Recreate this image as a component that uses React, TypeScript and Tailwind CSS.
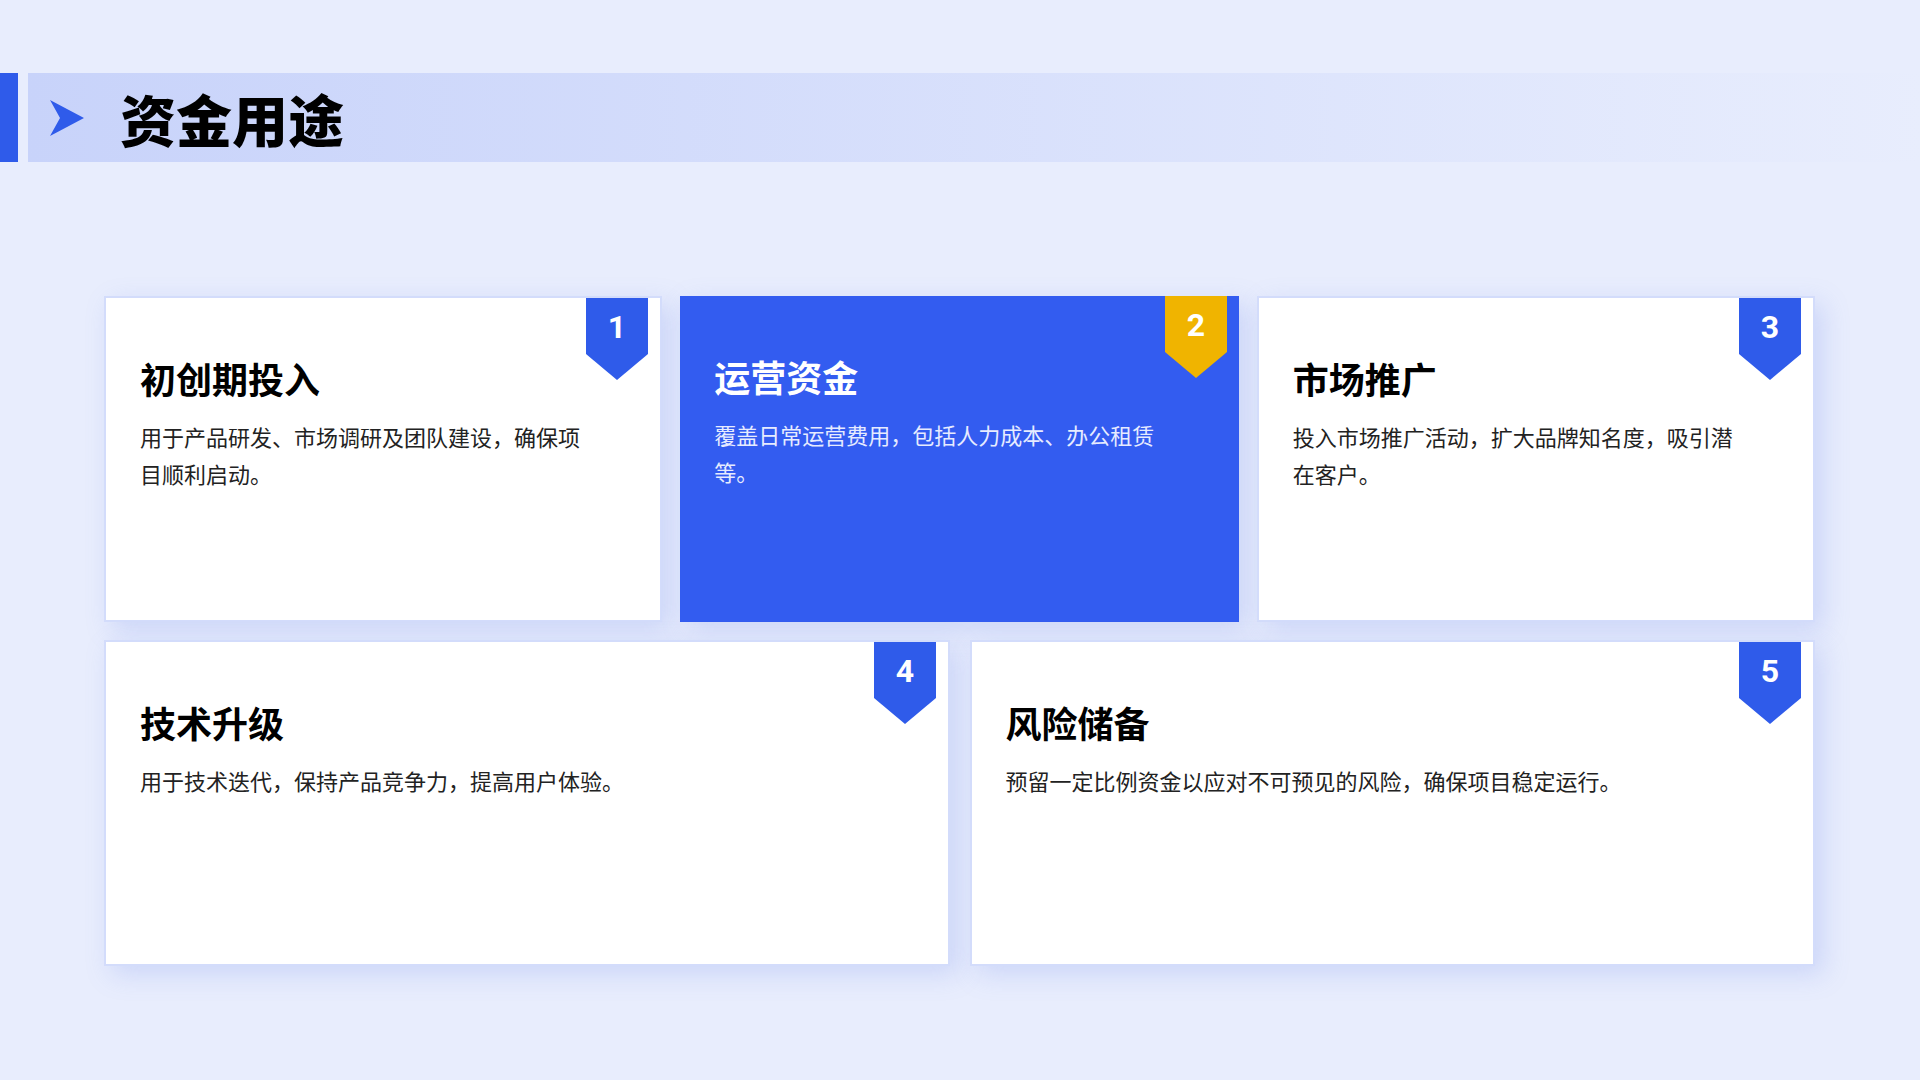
const cards = [
  { n: 1, title: "初创期投入", body: "用于产品研发、市场调研及团队建设，确保项目顺利启动。", active: false },
  { n: 2, title: "运营资金", body: "覆盖日常运营费用，包括人力成本、办公租赁等。", active: true },
  { n: 3, title: "市场推广", body: "投入市场推广活动，扩大品牌知名度，吸引潜在客户。", active: false },
];
const cards2 = [
  { n: 4, title: "技术升级", body: "用于技术迭代，保持产品竞争力，提高用户体验。", active: false },
  { n: 5, title: "风险储备", body: "预留一定比例资金以应对不可预见的风险，确保项目稳定运行。", active: false },
];

type Card = { n: number; title: string; body: string; active: boolean };

function Badge({ n, active }: { n: number; active: boolean }) {
  return (
    <svg className="absolute right-[12px] top-0" width="62" height="82" viewBox="0 0 62 82">
      <polygon points="0,0 62,0 62,56 31,82 0,56" fill={active ? "#F0B400" : "#2F5BEA"} />
      <text x="31" y="40" textAnchor="middle" fill="#fff" fontSize="32" fontWeight="700" fontFamily="Roboto, 'Liberation Sans', sans-serif">
        {n}
      </text>
    </svg>
  );
}

function CardBox({ c, wide }: { c: Card; wide?: boolean }) {
  return (
    <div
      className={`relative h-[326px] px-[34px] pt-[56px] ${
        c.active ? "bg-[#335CF0] text-white" : "bg-white border-2 border-[#d3dcfb] text-black"
      } shadow-[8px_8px_24px_rgba(120,145,235,0.25)]`}
    >
      <Badge n={c.n} active={c.active} />
      <h2 className="text-[36px] font-bold leading-[48px]">{c.title}</h2>
      <p className={`mt-[16px] text-[22px] leading-[37px] ${wide ? "pr-8" : "pr-[40px]"} ${c.active ? "text-[#e6ebff]" : "text-[#222]"}`}>
        {c.body}
      </p>
    </div>
  );
}

export default function App() {
  return (
    <div
      className="w-[1920px] h-[1080px] bg-[#E8EDFD] overflow-hidden"
      style={{ fontFamily: "'Noto Sans CJK SC', 'Noto Sans', sans-serif" }}
    >
      <div className="flex pt-[73px] h-[162px]">
        <div className="w-[18px] bg-[#2F5BEA]" />
        <div className="ml-[10px] flex-1 flex items-center bg-gradient-to-r from-[#c8d3fa] to-[#e8edfd]">
          <svg className="ml-[22px]" width="34" height="36" viewBox="0 0 34 36">
            <polygon points="0,0 34,18 0,36 10,18" fill="#2F5BEA" />
          </svg>
          <h1 className="ml-[36px] text-[56px] font-black text-black leading-none">资金用途</h1>
        </div>
      </div>
      <div className="px-[104px] pt-[134px] pr-[105px] flex flex-col gap-[18px]">
        <div className="grid grid-cols-3 gap-[18px]">
          {cards.map((c) => (
            <CardBox key={c.n} c={c} />
          ))}
        </div>
        <div className="grid grid-cols-2 gap-[20px]">
          {cards2.map((c) => (
            <CardBox key={c.n} c={c} wide />
          ))}
        </div>
      </div>
    </div>
  );
}
